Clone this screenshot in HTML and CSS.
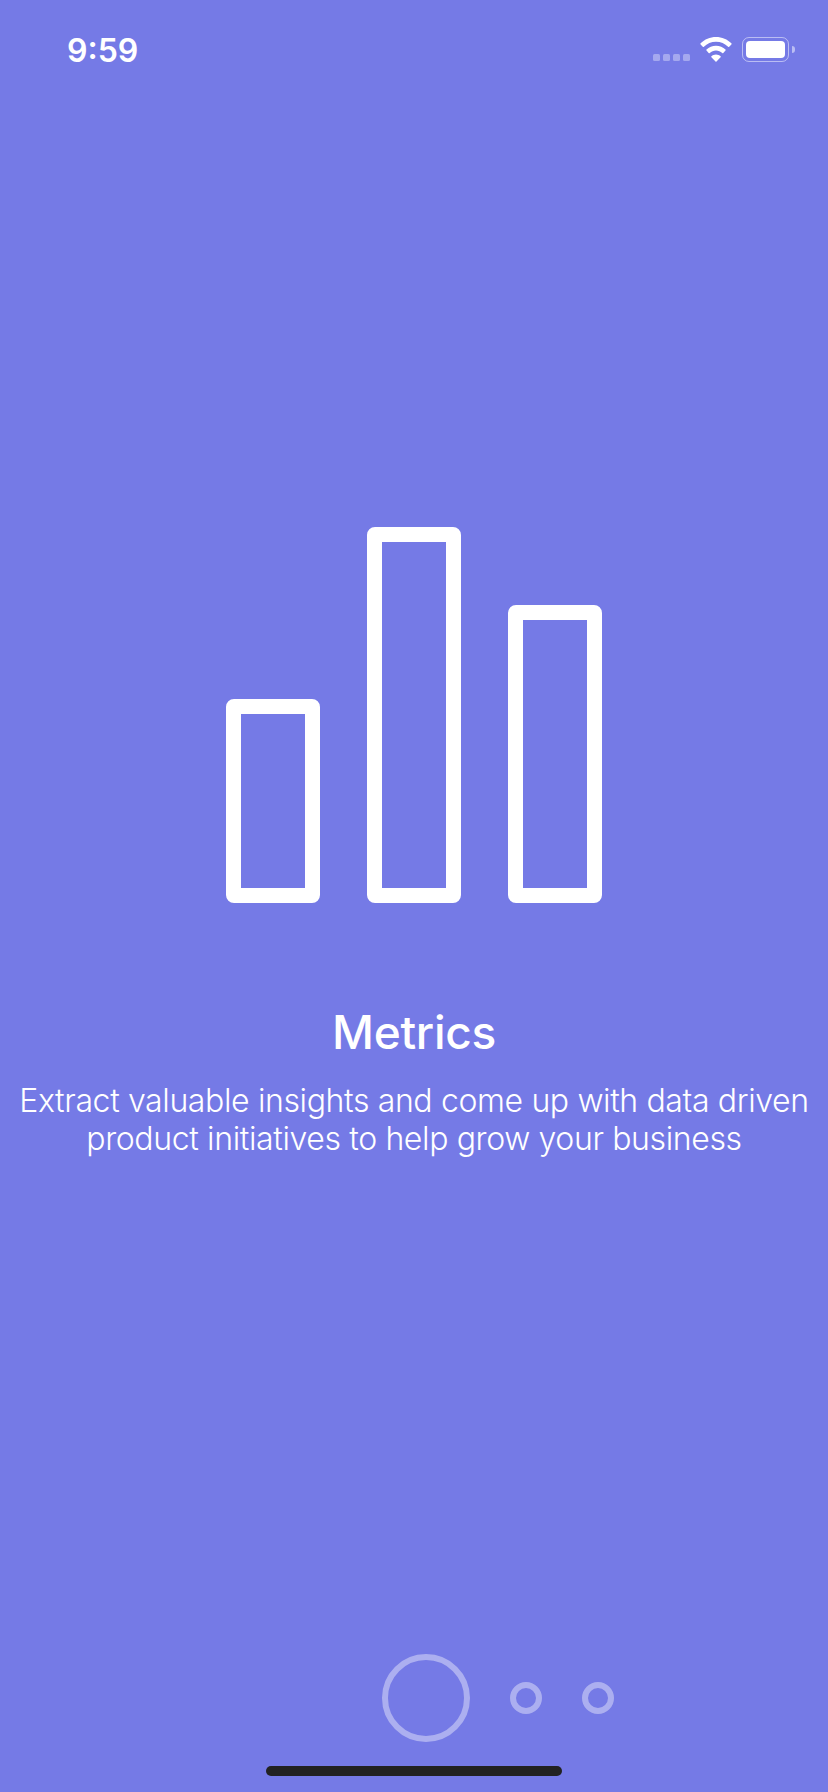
FILE: index.html
```html
<!DOCTYPE html>
<html lang="en">
<head>
	<meta charset="UTF-8">
	<title>Metrics</title>
	<link rel="stylesheet" href="styles.css">
</head>
<body>
	<div class="page">
		<div class="status">
			<span class="time">9:59</span>
			<div class="status-icons">
				<div class="signal">
					<span></span><span></span><span></span><span></span>
				</div>
				<svg class="wifi" width="32" height="25" viewBox="0 0 32 25">
					<path fill="#fff" d="M16 0C10 0 4.600 2.400.6 6.300a.8.8 0 0 0 0 1.100l2.200 2.300a.8.8 0 0 0 1.100 0C7 6.600 11.300 4.700 16 4.700s9 1.900 12.100 5a.8.8 0 0 0 1.100 0l2.200-2.300a.8.8 0 0 0 0-1.100C27.400 2.400 22 0 16 0z"/>
					<path fill="#fff" d="M16 8.700c-3.700 0-7 1.400-9.500 3.800a.8.800 0 0 0 0 1.100l2.200 2.300a.8.8 0 0 0 1.100 0c1.600-1.400 3.800-2.400 6.200-2.400s4.600 1 6.200 2.400a.8.8 0 0 0 1.100 0l2.200-2.300a.8.8 0 0 0 0-1.100C23 10.100 19.700 8.700 16 8.700z"/>
					<path fill="#fff" d="M16 17.400c-1.800 0-3.400.7-4.600 1.800a.7.7 0 0 0 0 1l4.100 4.200a.7.7 0 0 0 1 0l4.100-4.200a.7.7 0 0 0 0-1c-1.200-1.100-2.800-1.800-4.600-1.800z"/>
				</svg>
				<div class="battery">
					<div class="battery-body"><div class="battery-fill"></div></div>
					<div class="battery-nub"></div>
				</div>
			</div>
		</div>

		<div class="chart">
			<div class="bar bar-low"></div>
			<div class="bar bar-high"></div>
			<div class="bar bar-mid"></div>
		</div>

		<h1 class="title">Metrics</h1>
		<p class="desc">Extract valuable insights and come up with data driven<br>product initiatives to help grow your business</p>

		<div class="pager">
			<div class="dot dot-active"></div>
			<div class="dot"></div>
			<div class="dot"></div>
		</div>

		<div class="home-bar"></div>
	</div>
</body>
</html>
```

FILE: styles.css
```css
*{
	box-sizing: border-box;
}
body{
	margin: 0;
	background: #757ae6;
	font-family: Inter, "Liberation Sans", sans-serif;
	color: #fff;
}
.page{
	display: flex;
	flex-direction: column;
	align-items: center;
	height: 1792px;
	overflow: hidden;
}

/* status bar */
.status{
	display: flex;
	justify-content: space-between;
	align-items: flex-start;
	width: 100%;
	height: 527px;
	padding: 32px 33px 0 67px;
}
.time{
	font-size: 32px;
	line-height: 38px;
	font-weight: 600;
}
.status-icons{
	display: flex;
	align-items: flex-start;
	padding-top: 5px;
}
.signal{
	display: flex;
	gap: 3px;
	margin: 17px 10px 0 0;
}
.signal span{
	width: 7px;
	height: 7px;
	border-radius: 1.5px;
	background: rgba(255,255,255,.35);
}
.wifi{
	display: block;
}
.battery{
	display: flex;
	align-items: center;
	margin-left: 10px;
}
.battery-body{
	width: 47px;
	height: 25px;
	padding: 3px;
	border: 1.5px solid rgba(255,255,255,.5);
	border-radius: 7px;
}
.battery-fill{
	height: 100%;
	border-radius: 4px;
	background: #fff;
}
.battery-nub{
	width: 3px;
	height: 7px;
	margin-left: 3px;
	border-radius: 0 3px 3px 0;
	background: rgba(255,255,255,.5);
}

/* icon */
.chart{
	display: flex;
	align-items: flex-end;
	gap: 47px;
	height: 376px;
}
.bar{
	width: 94px;
	border: 15.5px solid #fff;
	border-radius: 8px;
}
.bar-low{
	height: 204px;
}
.bar-high{
	height: 376px;
}
.bar-mid{
	height: 298px;
}

.title{
	margin: 101px 0 0;
	font-size: 46px;
	line-height: 56px;
	font-weight: 500;
	letter-spacing: -.3px;
}
.desc{
	margin: 22px 0 0;
	font-size: 32px;
	line-height: 38px;
	font-weight: 300;
	letter-spacing: -.37px;
	text-align: center;
	white-space: nowrap;
}

/* pager */
.pager{
	display: flex;
	align-items: center;
	gap: 40px;
	margin: auto 0 0;
	padding-left: 168px;
}
.dot{
	width: 32px;
	height: 32px;
	border: 6px solid rgba(255,255,255,.4);
	border-radius: 50%;
}
.dot-active{
	width: 88px;
	height: 88px;
}
.home-bar{
	flex: none;
	width: 296px;
	height: 10px;
	margin: 24px 0 16px;
	border-radius: 5px;
	background: #222;
}
```
